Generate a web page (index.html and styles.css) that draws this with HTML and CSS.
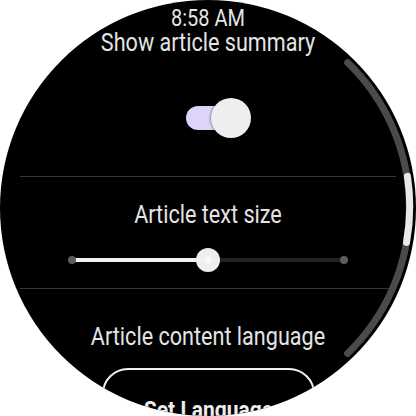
FILE: index.html
```html
<!DOCTYPE html>
<html>
<head>
<meta charset="utf-8">
<link rel="stylesheet" href="styles.css">
</head>
<body>
<div class="watch">
  <div class="screen">
    <div class="time"><span class="tx">8:58 AM</span></div>
    <div class="title"><span class="tx">Show article summary</span></div>
    <div class="toggle-row">
      <div class="toggle">
        <div class="track"></div>
        <div class="knob"></div>
      </div>
    </div>
    <div class="divider first"></div>
    <div class="label"><span class="tx">Article text size</span></div>
    <div class="slider-row">
      <div class="slider">
        <div class="fill"></div>
        <div class="rest"></div>
        <span class="dot left"></span>
        <span class="dot right"></span>
        <span class="thumb"></span>
      </div>
    </div>
    <div class="divider second"></div>
    <div class="label lang"><span class="tx">Article content language</span></div>
    <div class="button"><span class="tx">Set Language</span></div>
  </div>
  <svg class="scrollbar" width="416" height="416" viewBox="0 0 416 416">
    <path d="M 347.6 62.6 A 202 202 0 0 1 347.6 353.4" fill="none" stroke="#4a4a4a" stroke-width="7" stroke-linecap="round"/>
    <path d="M 407.5 176.4 A 202 202 0 0 1 406.5 242.4" fill="none" stroke="#e8e8ec" stroke-width="7" stroke-linecap="round"/>
  </svg>
</div>
</body>
</html>
```
FILE: styles.css
```css
html, body {
  margin: 0;
  padding: 0;
  background: #ffffff;
}
.watch {
  position: relative;
  width: 416px;
  height: 416px;
  border-radius: 50%;
  overflow: hidden;
  background: #000000;
}
.screen {
  display: flex;
  flex-direction: column;
  font-family: Roboto, "Noto Sans", sans-serif;
  color: #e4e4e4;
}
.tx {
  display: inline-block;
  transform: scaleY(1.15);
}
.time {
  padding-top: 7px;
  height: 22px;
  line-height: 22px;
  font-size: 20px;
  text-align: center;
}
.title {
  margin-top: 2px;
  height: 24px;
  line-height: 24px;
  font-size: 21.6px;
  text-align: center;
}
.toggle-row {
  margin-top: 43px;
  height: 40px;
  padding-left: 186px;
  display: flex;
}
.toggle {
  position: relative;
  width: 65px;
  height: 40px;
  display: flex;
  align-items: center;
}
.track {
  width: 50px;
  height: 24px;
  border-radius: 12px;
  background: #ddd3fb;
}
.knob {
  position: absolute;
  right: 0;
  top: 0;
  width: 40px;
  height: 40px;
  border-radius: 50%;
  background: #eeeeee;
  box-shadow: -1px 0 2px rgba(0,0,0,0.35);
}
.divider {
  height: 1px;
  background: #363636;
  margin-left: 20px;
  margin-right: 20px;
}
.divider.first {
  margin-top: 38px;
}
.label {
  margin-top: 26px;
  height: 24px;
  line-height: 24px;
  font-size: 21.6px;
  text-align: center;
}
.slider-row {
  margin-top: 21px;
  height: 24px;
  padding-left: 68px;
  display: flex;
}
.slider {
  position: relative;
  width: 280px;
  height: 24px;
  display: flex;
  align-items: center;
  padding: 0 4px;
  box-sizing: border-box;
}
.fill {
  width: 136px;
  height: 4px;
  background: #f2f2f2;
}
.rest {
  flex: 1;
  height: 4px;
  background: #232323;
}
.dot {
  position: absolute;
  top: 8px;
  width: 8px;
  height: 8px;
  border-radius: 50%;
  background: #5c5c5c;
}
.dot.left { left: 0; }
.dot.right { right: 0; }
.thumb {
  position: absolute;
  left: 128px;
  top: 0;
  width: 24px;
  height: 24px;
  border-radius: 50%;
  background: radial-gradient(circle, #f8f8f8 0, #f8f8f8 3px, #efefef 5px, #efefef 100%);
}
.divider.second {
  margin-top: 16px;
}
.label.lang {
  margin-top: 36px;
}
.button {
  margin-top: 19px;
  margin-left: 102px;
  width: 213px;
  height: 84px;
  box-sizing: border-box;
  border: 2px solid #f0f0f0;
  border-radius: 26px;
  text-align: center;
  font-size: 21px;
  font-weight: bold;
  line-height: 24px;
  padding-top: 28px;
  color: #ececec;
}
.scrollbar {
  position: absolute;
  left: 0;
  top: 0;
}
```
